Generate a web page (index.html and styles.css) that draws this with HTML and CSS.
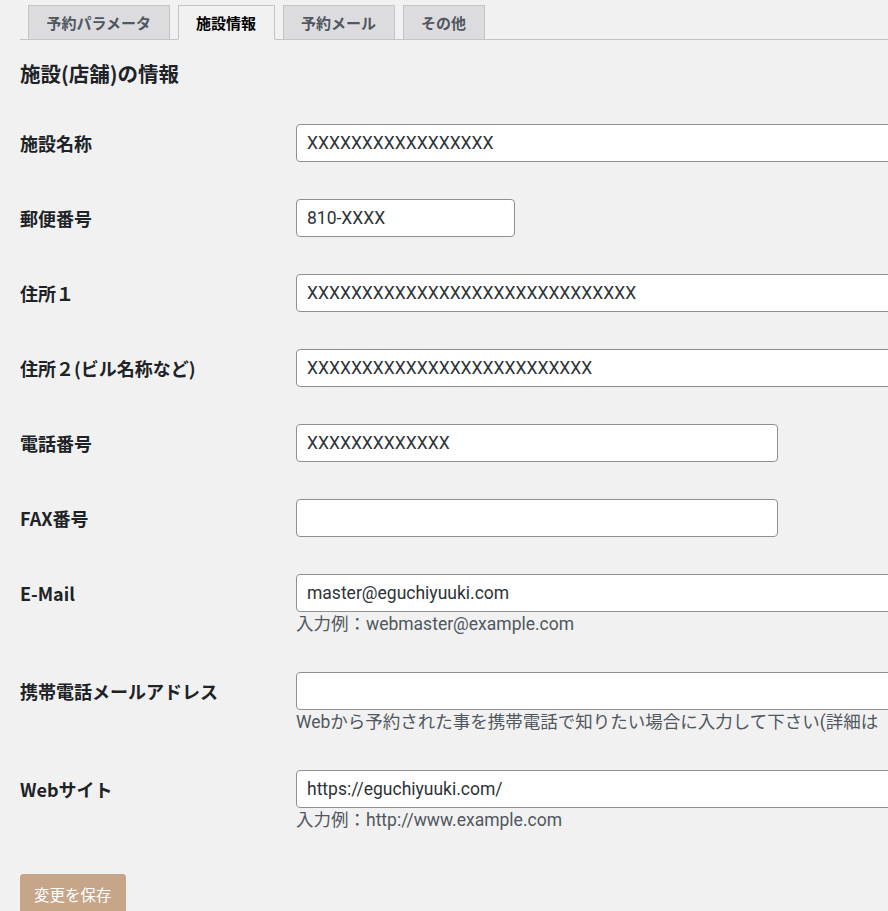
FILE: index.html
```html
<!DOCTYPE html>
<html lang="ja">
<head>
<meta charset="utf-8">
<title>施設情報</title>
<link rel="stylesheet" href="styles.css">
</head>
<body>
<div class="wrap">
  <nav class="tabs">
    <a class="tab">予約パラメータ</a>
    <a class="tab tab-active">施設情報</a>
    <a class="tab">予約メール</a>
    <a class="tab">その他</a>
  </nav>
  <h2 class="title">施設(店舗)の情報</h2>
  <form class="form">
    <div class="row">
      <label class="label">施設名称</label>
      <div class="field"><input class="input wide" type="text" value="XXXXXXXXXXXXXXXXX"></div>
    </div>
    <div class="row">
      <label class="label">郵便番号</label>
      <div class="field"><input class="input short" type="text" value="810-XXXX"></div>
    </div>
    <div class="row">
      <label class="label">住所１</label>
      <div class="field"><input class="input wide" type="text" value="XXXXXXXXXXXXXXXXXXXXXXXXXXXXXX"></div>
    </div>
    <div class="row">
      <label class="label">住所２(ビル名称など)</label>
      <div class="field"><input class="input wide" type="text" value="XXXXXXXXXXXXXXXXXXXXXXXXXX"></div>
    </div>
    <div class="row">
      <label class="label">電話番号</label>
      <div class="field"><input class="input medium" type="text" value="XXXXXXXXXXXXX"></div>
    </div>
    <div class="row">
      <label class="label">FAX番号</label>
      <div class="field"><input class="input medium" type="text" value=""></div>
    </div>
    <div class="row">
      <label class="label">E-Mail</label>
      <div class="field">
        <input class="input wide" type="text" value="master@eguchiyuuki.com">
        <p class="hint">入力例：webmaster@example.com</p>
      </div>
    </div>
    <div class="row">
      <label class="label">携帯電話メールアドレス</label>
      <div class="field">
        <input class="input wide" type="text" value="">
        <p class="hint">Webから予約された事を携帯電話で知りたい場合に入力して下さい(詳細は</p>
      </div>
    </div>
    <div class="row">
      <label class="label">Webサイト</label>
      <div class="field">
        <input class="input wide" type="text" value="https://eguchiyuuki.com/">
        <p class="hint">入力例：http://www.example.com</p>
      </div>
    </div>
    <div class="submit">
      <button class="button" type="button">変更を保存</button>
    </div>
  </form>
</div>
</body>
</html>
```
FILE: styles.css
```css
html, body {
  margin: 0;
  padding: 0;
  overflow: hidden;
  background: #f1f1f1;
}
body {
  font-family: "Segoe UI", Roboto, "Noto Sans CJK JP", sans-serif;
  color: #1d2327;
  width: 888px;
  height: 911px;
}
.wrap {
  padding-left: 20px;
}
.tabs {
  display: flex;
  padding-top: 5px;
  border-bottom: 1px solid #c3c4c7;
  white-space: nowrap;
}
.tab {
  display: block;
  margin-left: 8px;
  height: 33px;
  line-height: 33px;
  padding: 0 17.5px;
  border: 1px solid #c3c4c7;
  background: #dcdcde;
  color: #50575e;
  font-family: "Noto Sans CJK JP", sans-serif;
  font-size: 15px;
  font-weight: 700;
  margin-bottom: -1px;
}
.tab-active {
  background: #f1f1f1;
  color: #000;
  border-bottom-color: #f1f1f1;
}
.title {
  margin: 18px 0 36px;
  font-family: "Noto Sans CJK JP", sans-serif;
  font-size: 20.5px;
  line-height: 30px;
  font-weight: 700;
  color: #1d2327;
}
.row {
  display: grid;
  grid-template-columns: 276px minmax(0, 1fr);
  margin-bottom: 37px;
}
.label {
  font-family: "Noto Sans CJK JP", sans-serif;
  font-size: 18px;
  font-weight: 700;
  line-height: 38px;
  color: #1d2327;
  white-space: nowrap;
}
.field {
  display: flex;
  flex-direction: column;
  min-width: 0;
  overflow: hidden;
}
.input {
  box-sizing: border-box;
  flex: none;
  height: 38px;
  margin: 0;
  padding: 0 10px;
  border: 1px solid #8c8f94;
  border-radius: 4px;
  background: #fff;
  color: #2c3338;
  font-family: "Segoe UI", Roboto, "Noto Sans CJK JP", sans-serif;
  font-size: 17.5px;
  outline: none;
}
.wide { width: 640px; }
.medium { width: 482px; }
.short { width: 219px; }
.hint {
  margin: 0;
  height: 23px;
  line-height: 25px;
  font-size: 17.5px;
  color: #50575e;
  white-space: nowrap;
  overflow: hidden;
}
.submit {
  padding-top: 6px;
}
.button {
  box-sizing: border-box;
  height: 40px;
  padding: 0 13px;
  border: 1px solid #c7a589;
  border-radius: 3px;
  background: #c7a589;
  color: #fff;
  font-family: "Noto Sans CJK JP", sans-serif;
  font-size: 15.5px;
  font-weight: 400;
  line-height: 36px;
  cursor: pointer;
}
```
